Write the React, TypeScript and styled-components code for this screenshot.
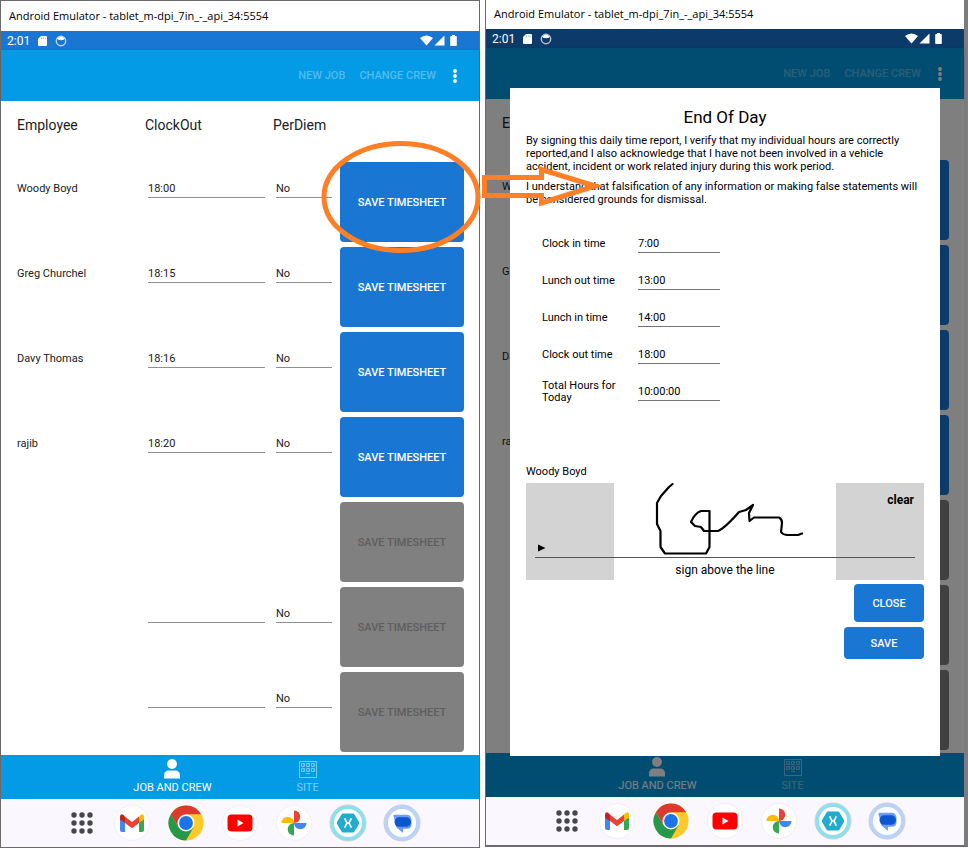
import React, { useId } from "react";
import styled, { createGlobalStyle, css } from "styled-components";

const Global = createGlobalStyle`
  *, *::before, *::after { box-sizing: border-box; }
  body { margin: 0; background: #fff; color: #212121; font-family: Roboto, "Liberation Sans", sans-serif; font-size: 11px; }
  button, input { font: inherit; color: inherit; margin: 0; }
`;

const Page = styled.main`
  display: grid;
  grid-template-columns: 480fr 483fr;
  gap: 5px;
  min-height: 100vh;
`;

const Emulator = styled.section<{ $second?: boolean }>`
  position: relative;
  display: flex;
  flex-direction: column;
  min-width: 0;
  border: 1px solid #6b6b6b;
  ${(p) =>
    p.$second &&
    css`
      border-top: 0;
      border-right: 4px solid #7c7c7c;
      border-bottom: 2px solid #6b6b6b;
      margin-bottom: 1px;
    `}
`;

const TitleBar = styled.h1<{ $second?: boolean }>`
  margin: 0;
  padding: 0 8px;
  height: ${(p) => (p.$second ? 29 : 30)}px;
  font: 400 11px "Open Sans", "Noto Sans", sans-serif;
  line-height: ${(p) => (p.$second ? 28 : 30)}px;
  color: #000;
  background: #fff;
  white-space: nowrap;
`;

const StatusBar = styled.div<{ $dim?: boolean }>`
  display: flex;
  align-items: center;
  height: 19px;
  padding: 0 21px 0 6px;
  gap: 8px;
  background: ${(p) => (p.$dim ? "#0c3b69" : "#1976d2")};
  color: #fff;
  font-size: 12px;
  svg { display: block; }
`;

const StatusRight = styled.div`
  display: flex;
  gap: 1px;
  margin-left: auto;
`;

const Screen = styled.div`
  position: relative;
  flex: 1;
  display: flex;
  flex-direction: column;
`;

const AppBar = styled.header`
  display: flex;
  align-items: center;
  justify-content: flex-end;
  gap: 14px;
  height: 51px;
  padding-right: 19px;
  background: #039be5;
  box-shadow: 0 1px 3px rgba(0, 0, 0, 0.2);
`;

const BarAction = styled.button`
  padding: 0;
  border: 0;
  background: none;
  font-weight: 500;
  color: #53bbee;
`;

const MoreButton = styled.button`
  padding: 0;
  border: 0;
  background: none;
  width: 10px;
  height: 18px;
  svg { display: block; }
`;

const Crew = styled.div`
  flex: 1;
  padding: 0 14px 0 16px;
  background: #fff;
`;

const crewColumns = css`
  display: grid;
  grid-template-columns: 2fr 2fr 1fr 2fr;
  align-items: start;
`;

const CrewHead = styled.div`
  ${crewColumns}
  height: 59px;
  padding-top: 15px;
  font-size: 14px;
  line-height: 18px;
`;

const CrewRow = styled.div`
  ${crewColumns}
  height: 85px;
`;

const Name = styled.div`
  padding-top: 21px;
  line-height: 16px;
`;

const Field = styled.input<{ $narrow?: boolean }>`
  display: block;
  min-width: 0;
  width: auto;
  height: 30px;
  margin: 8px ${(p) => (p.$narrow ? 5 : 8)}px 0 3px;
  padding: 11px 0 0;
  border: 0;
  border-bottom: 1px solid #8f8f8f;
  border-radius: 0;
  background: none;
`;

const SaveCell = styled.div`
  position: relative;
  grid-column: 4;
  padding: 2px 1px 3px 3px;
`;

const SaveTimesheet = styled.button`
  display: block;
  width: 100%;
  height: 80px;
  padding: 0;
  border: 0;
  border-radius: 4px;
  background: #1976d2;
  color: #fff;
  font-weight: 500;
  &:disabled { background: #808080; color: #5e5e5e; }
`;

const Ring = styled.svg`
  position: absolute;
  left: -16px;
  top: -20px;
  z-index: 2;
  pointer-events: none;
`;

const Arrow = styled.svg`
  position: absolute;
  left: -5px;
  top: 165px;
  z-index: 4;
  pointer-events: none;
`;

const Tabs = styled.nav`
  display: flex;
  justify-content: center;
  gap: 85px;
  height: 44px;
  padding-right: 28px;
  background: #039be5;
`;

const Tab = styled.button<{ $active?: boolean }>`
  display: flex;
  flex-direction: column;
  align-items: center;
  justify-content: flex-end;
  gap: 2px;
  padding: 0 0 4px;
  border: 0;
  background: none;
  line-height: 14px;
  color: ${(p) => (p.$active ? "#fff" : "#7dccf2")};
`;

const Taskbar = styled.footer`
  display: flex;
  align-items: center;
  justify-content: center;
  height: 48px;
  gap: 16px;
  background: #faf7ff;
`;

const Launcher = styled.button`
  padding: 0;
  border: 0;
  background: none;
  width: 38px;
  height: 38px;
  svg { display: block; }
`;

const Scrim = styled.div`
  position: absolute;
  inset: 0;
  z-index: 3;
  display: flex;
  padding: 40px 24px 41px;
  background: rgba(0, 0, 0, 0.5);
`;

const Dialog = styled.div`
  flex: 1;
  padding: 19px 16px 16px;
  background: #fff;
  color: #000;
`;

const DialogTitle = styled.h2`
  margin: 0 0 7px;
  font-size: 17px;
  line-height: 20px;
  font-weight: 400;
  text-align: center;
`;

const Legal = styled.p`
  margin: 0 0 7px;
  line-height: 13px;
  white-space: nowrap;
`;

const Times = styled.div`
  margin: 19px 0 0 16px;
`;

const TimeRow = styled.div`
  display: grid;
  grid-template-columns: 80px 82px;
  gap: 16px;
  height: 37px;
  align-items: center;
`;

const TimeLabel = styled.label`
  line-height: 12px;
`;

const TimeInput = styled.input`
  display: block;
  width: 100%;
  height: 18px;
  padding: 0;
  border: 0;
  border-bottom: 1px solid #777;
  border-radius: 0;
  background: none;
`;

const Signer = styled.div`
  margin-top: 54px;
  line-height: 16px;
`;

const Pad = styled.div`
  display: grid;
  grid-template-columns: 88px 1fr 88px;
  height: 97px;
  margin-top: 3px;
  position: relative;
`;

const PadSide = styled.div`
  background: #d3d3d3;
  text-align: right;
  padding: 10px;
`;

const ClearButton = styled.button`
  padding: 0;
  border: 0;
  background: none;
  font-size: 12px;
  font-weight: 700;
`;

const SignLine = styled.div`
  position: absolute;
  left: 9px;
  right: 9px;
  bottom: 0;
  height: 23px;
  border-top: 1px solid #555;
  padding-top: 5px;
  text-align: center;
  font-size: 12px;
  line-height: 14px;
`;

const Caret = styled.svg`
  position: absolute;
  left: 12px;
  bottom: 28px;
`;

const PadMiddle = styled.div`
  display: flex;
  justify-content: center;
  svg { display: block; }
`;

const Actions = styled.div`
  display: flex;
  flex-direction: column;
  align-items: flex-end;
  gap: 5px;
  margin-top: 4px;
`;

const Action = styled.button<{ $wide?: boolean }>`
  width: ${(p) => (p.$wide ? 80 : 70)}px;
  height: ${(p) => (p.$wide ? 32 : 38)}px;
  padding: 0;
  border: 0;
  border-radius: 4px;
  background: #1976d2;
  color: #fff;
  font-weight: 500;
`;

const SdIcon = () => (
  <svg width="9" height="10" viewBox="0 0 9 10" aria-hidden="true">
    <path d="M3 0h5q1 0 1 1v8q0 1-1 1H1q-1 0-1-1V3z" fill="#fff" />
    <path d="M3.5 1.5v1.700M5.300 1.500v1.700M7.100 1.500v1.700" stroke="#6fa5dd" strokeWidth=".7" />
  </svg>
);

const DebugIcon = () => (
  <svg width="12" height="12" viewBox="0 0 12 12" aria-hidden="true">
    <circle cx="6" cy="6" r="4.700" fill="none" stroke="#fff" strokeOpacity=".7" strokeWidth="1.400" />
    <path d="M2.200 3.500Q6 .2 9.800 3.500L8.800 4.800Q6 5.600 3.200 4.800z" fill="#fff" />
  </svg>
);

const WifiIcon = () => (
  <svg width="13" height="11" viewBox="0 0 13 11" aria-hidden="true">
    <path d="M0 3Q6.500-2 13 3L6.500 10.500z" fill="#fff" />
  </svg>
);

const SignalIcon = () => (
  <svg width="11" height="11" viewBox="0 0 11 11" aria-hidden="true">
    <path d="M10.500 .5v10H.5z" fill="#fff" />
  </svg>
);

const BatteryIcon = () => (
  <svg width="12" height="11" viewBox="0 0 12 11" aria-hidden="true">
    <path d="M6 0h3v1h1q.8 0 .8.8v8.400q0 .8-.8.8H5q-.8 0-.8-.8V1.800q0-.8.8-.8h1z" fill="#fff" />
  </svg>
);

const DotsIcon = () => (
  <svg width="10" height="18" viewBox="0 0 10 18" fill="#fff" aria-hidden="true">
    <circle cx="5" cy="4" r="1.900" />
    <circle cx="5" cy="9" r="1.900" />
    <circle cx="5" cy="14" r="1.900" />
  </svg>
);

const PersonIcon = () => (
  <svg width="18" height="20" viewBox="0 0 18 20" fill="currentColor" aria-hidden="true">
    <circle cx="9" cy="5" r="4.900" />
    <path d="M1 19.500V17q0-5.500 5-5.500h6q5 0 5 5.500v2.500z" />
  </svg>
);

const SiteIcon = () => (
  <svg width="18" height="18" viewBox="0 0 18 18" fill="none" stroke="currentColor" aria-hidden="true">
    <path d="M.5.5h17v16H.5z" />
    <path d="M2.500 2.500h3v3h-3zM7.500 2.500h3v3h-3zM12.500 2.500h3v3h-3zM2.500 7.500h3v3h-3zM7.500 7.500h3v3h-3zM12.500 7.500h3v3h-3zM7 12.500h4M4 4h1M9 4h1M14 4h1M4 9h1M9 9h1M14 9h1" strokeWidth=".9" />
  </svg>
);

const AppsIcon = () => (
  <svg width="38" height="38" viewBox="0 0 38 38" fill="#46464f" aria-hidden="true">
    {[11, 19, 27].map((y) => [15, 23, 31].map((x) => <circle key={`${x}-${y}`} cx={x} cy={y} r="2.700" />))}
  </svg>
);

const Disc = () => <circle cx="19" cy="19" r="17.500" fill="#fff" stroke="#f1eef5" />;

const GmailIcon = () => (
  <svg width="38" height="38" viewBox="0 0 38 38" aria-hidden="true">
    <Disc />
    <path d="M7 13v13q0 2 2 2h3V16z" fill="#4285f4" />
    <path d="M31 13v13q0 2-2 2h-3V16z" fill="#34a853" />
    <path d="M26 12.500l1.500-1.500Q31 9 31 13v2.500L26 19z" fill="#fbbc04" />
    <path d="M12 12.500L10.500 11Q7 9 7 13v2.500L12 19z" fill="#c5221f" />
    <path d="M12 12.500l7 5.500 7-5.500V19l-7 5.200L12 19z" fill="#ea4335" />
  </svg>
);

const ChromeIcon = () => (
  <svg width="38" height="38" viewBox="0 0 38 38" aria-hidden="true">
    <circle cx="19" cy="19" r="17.500" fill="#ffc928" />
    <path d="M3.840 10.250A17.500 17.500 0 0 1 34.160 10.250H19L11.420 23.370z" fill="#dc3a2e" />
    <path d="M3.840 10.250A17.500 17.500 0 0 0 19 36.500L26.580 23.370H11.420z" fill="#26984a" />
    <circle cx="19" cy="19" r="8.500" fill="#fff" />
    <circle cx="19" cy="19" r="6.900" fill="#1a73e8" />
  </svg>
);

const YoutubeIcon = () => (
  <svg width="38" height="38" viewBox="0 0 38 38" aria-hidden="true">
    <Disc />
    <rect x="6.500" y="10.500" width="25" height="17" rx="4" fill="#f00" />
    <path d="M16.500 15.500v7l6-3.500z" fill="#fff" />
  </svg>
);

const PhotosIcon = () => (
  <svg width="38" height="38" viewBox="0 0 38 38" aria-hidden="true">
    <Disc />
    <path d="M19 6.500a6.200 6.200 0 0 1 0 12.500z" fill="#ea4335" />
    <path d="M31.500 19a6.200 6.200 0 0 1-12.500 0z" fill="#4285f4" />
    <path d="M19 31.500a6.200 6.200 0 0 1 0-12.500z" fill="#34a853" />
    <path d="M6.500 19a6.200 6.200 0 0 1 12.500 0z" fill="#fbbc04" />
  </svg>
);

const XamarinIcon = () => (
  <svg width="38" height="38" viewBox="0 0 38 38" aria-hidden="true">
    <circle cx="19" cy="19" r="18" fill="#8ce0ee" stroke="#ccd0d6" />
    <circle cx="19" cy="19" r="14" fill="#fff" />
    <path d="M14 9.500h10q1 0 1.500 1l4.500 7.500q.5 1 0 2l-4.500 7.500q-.5 1-1.500 1H14q-1 0-1.500-1L8 20q-.5-1 0-2l4.500-7.500q.5-1 1.500-1z" fill="#22abcf" />
    <path d="M15.700 14.300L18 19l-2.300 4.700M22.300 14.300L20 19l2.300 4.700M18 19h2" fill="none" stroke="#fff" strokeWidth="1.700" />
  </svg>
);

const MessagesIcon = () => (
  <svg width="38" height="38" viewBox="0 0 38 38" aria-hidden="true">
    <circle cx="19" cy="19" r="18" fill="#b9d3fb" stroke="#cccdd6" />
    <circle cx="19" cy="19" r="14" fill="#fff" />
    <path d="M10.300 11.500Q10.500 10.700 11.500 10.700H23.500Q28 10.700 28.500 16V20Q28.500 24.700 24 24.700H20V28Q20 29 19 28.300L15 24.700Q12.500 23.500 12.500 19.500z" fill="#6c9bff" />
    <rect x="11.500" y="13.300" width="16.500" height="9.500" rx="4.700" fill="#0b57d0" />
  </svg>
);

const Phone = ({ second, children }: { second?: boolean; children?: React.ReactNode }) => (
  <Emulator $second={second}>
    <TitleBar $second={second}>Android Emulator - tablet_m-dpi_7in_-_api_34:5554</TitleBar>
    <StatusBar $dim={second}>
      <span>2:01</span>
      <SdIcon />
      <DebugIcon />
      <StatusRight>
        <WifiIcon />
        <SignalIcon />
        <BatteryIcon />
      </StatusRight>
    </StatusBar>
    <Screen>
      <AppBar>
        <BarAction>NEW JOB</BarAction>
        <BarAction>CHANGE CREW</BarAction>
        <MoreButton aria-label="More options">
          <DotsIcon />
        </MoreButton>
      </AppBar>
      <Crew>
        <CrewHead>
          <span>Employee</span>
          <span>ClockOut</span>
          <span>PerDiem</span>
        </CrewHead>
        {crew.map((row, i) => (
          <CrewRow key={i}>
            <Name>{row.name}</Name>
            {row.perDiem && (
              <>
                <Field aria-label="Clock out" defaultValue={row.clockOut} />
                <Field $narrow aria-label="Per diem" defaultValue={row.perDiem} />
              </>
            )}
            <SaveCell>
              <SaveTimesheet disabled={!row.name}>SAVE TIMESHEET</SaveTimesheet>
              {!second && i === 0 && (
                <Ring width="160" height="114" viewBox="0 0 160 114" aria-hidden="true">
                  <ellipse cx="80" cy="57" rx="77" ry="53.500" fill="none" stroke="#ff7f27" strokeWidth="5" />
                </Ring>
              )}
            </SaveCell>
          </CrewRow>
        ))}
      </Crew>
      <Tabs>
        <Tab $active>
          <PersonIcon />
          JOB AND CREW
        </Tab>
        <Tab>
          <SiteIcon />
          SITE
        </Tab>
      </Tabs>
      {children}
    </Screen>
    <Taskbar>
      {launchers.map(([label, Icon]) => (
        <Launcher key={label} aria-label={label}>
          <Icon />
        </Launcher>
      ))}
    </Taskbar>
    {second && (
      <Arrow width="126" height="44" viewBox="0 0 126 44" aria-hidden="true">
        <path d="M3.500 12.500H60.500V4.500L114 21 60.500 38V30.500H3.500z" fill="none" stroke="#ff7f27" strokeWidth="5" />
      </Arrow>
    )}
  </Emulator>
);

const launchers: [string, () => React.ReactElement][] = [
  ["All apps", AppsIcon],
  ["Gmail", GmailIcon],
  ["Chrome", ChromeIcon],
  ["YouTube", YoutubeIcon],
  ["Photos", PhotosIcon],
  ["Xamarin", XamarinIcon],
  ["Messages", MessagesIcon],
];

const crew = [
  { name: "Woody Boyd", clockOut: "18:00", perDiem: "No" },
  { name: "Greg Churchel", clockOut: "18:15", perDiem: "No" },
  { name: "Davy Thomas", clockOut: "18:16", perDiem: "No" },
  { name: "rajib", clockOut: "18:20", perDiem: "No" },
  { name: "", clockOut: "", perDiem: "" },
  { name: "", clockOut: "", perDiem: "No" },
  { name: "", clockOut: "", perDiem: "No" },
];

const TimeEntry = ({ label, value }: { label: string; value: string }) => {
  const id = useId();
  return (
    <TimeRow>
      <TimeLabel htmlFor={id}>{label}</TimeLabel>
      <TimeInput id={id} defaultValue={value} />
    </TimeRow>
  );
};

const EndOfDay = () => (
  <Scrim>
    <Dialog role="dialog" aria-label="End Of Day">
      <DialogTitle>End Of Day</DialogTitle>
      <Legal>
        By signing this daily time report, I verify that my individual hours are correctly
        <br />
        reported,and I also acknowledge that I have not been involved in a vehicle
        <br />
        accident, incident or work related injury during this work period.
      </Legal>
      <Legal>
        I understand that falsification of any information or making false statements will
        <br />
        be considered grounds for dismissal.
      </Legal>
      <Times>
        <TimeEntry label="Clock in time" value="7:00" />
        <TimeEntry label="Lunch out time" value="13:00" />
        <TimeEntry label="Lunch in time" value="14:00" />
        <TimeEntry label="Clock out time" value="18:00" />
        <TimeEntry label="Total Hours for Today" value="10:00:00" />
      </Times>
      <Signer>Woody Boyd</Signer>
      <Pad>
        <PadSide />
        <PadMiddle>
          <svg width="160" height="74" viewBox="0 0 160 74" fill="none" stroke="#000" strokeWidth="2.200" strokeLinejoin="round" strokeLinecap="round" aria-label="Signature">
            <path d="M27.500 1L24 4 16 13 12 20V41L15.500 48V64L20 70.500H61L64.500 64V28H56Q50 30 46 39L50 43 56 44 59 48H73Q80 45 94 29L101 27 108 22 104 30 104.500 38 109 34.500H134Q137 36 137 40L136 49Q138 52 143 52H153L157 50.500" />
          </svg>
        </PadMiddle>
        <PadSide>
          <ClearButton>clear</ClearButton>
        </PadSide>
        <Caret width="8" height="8" viewBox="0 0 8 8" aria-hidden="true">
          <path d="M0 .5v7L7.500 4z" fill="#000" />
        </Caret>
        <SignLine>sign above the line</SignLine>
      </Pad>
      <Actions>
        <Action>CLOSE</Action>
        <Action $wide>SAVE</Action>
      </Actions>
    </Dialog>
  </Scrim>
);

export default function App() {
  return (
    <>
      <Global />
      <Page>
        <Phone />
        <Phone second>
          <EndOfDay />
        </Phone>
      </Page>
    </>
  );
}
